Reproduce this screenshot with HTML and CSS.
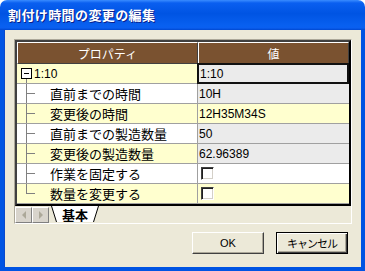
FILE: index.html
```html
<!DOCTYPE html>
<html lang="ja">
<head>
<meta charset="utf-8">
<link rel="stylesheet" href="styles.css">
</head>
<body>
<div class="window">
  <div class="titlebar"><span class="title">割付け時間の変更の編集</span></div>
  <div class="body">
    <div class="panel">
      <div class="grid">
        <div class="row head">
          <div class="hc hc1">プロパティ</div>
          <div class="hc hc2">値</div>
        </div>
        <div class="row">
          <div class="c1 yel root"><span class="minus"></span><span class="lat">1:10</span></div>
          <div class="c2 edit">1:10</div>
        </div>
        <div class="row">
          <div class="c1 wht"><span class="tree"></span>直前までの時間</div>
          <div class="c2 gry">10H</div>
        </div>
        <div class="row">
          <div class="c1 yel"><span class="tree"></span>変更後の時間</div>
          <div class="c2 yel">12H35M34S</div>
        </div>
        <div class="row">
          <div class="c1 wht"><span class="tree"></span>直前までの製造数量</div>
          <div class="c2 gry">50</div>
        </div>
        <div class="row">
          <div class="c1 yel"><span class="tree"></span>変更後の製造数量</div>
          <div class="c2 gry">62.96389</div>
        </div>
        <div class="row">
          <div class="c1 wht"><span class="tree"></span>作業を固定する</div>
          <div class="c2 wht"><span class="check"></span></div>
        </div>
        <div class="row">
          <div class="c1 yel"><span class="tree last"></span>数量を変更する</div>
          <div class="c2 yel"><span class="check"></span></div>
        </div>
      </div>
      <div class="tabs">
        <div class="sbtn"><svg width="6" height="8" viewBox="0 0 6 8"><polygon points="5,0 5,8 1,4" fill="#aca899"/></svg></div>
        <div class="sbtn"><svg width="6" height="8" viewBox="0 0 6 8"><polygon points="1,0 1,8 5,4" fill="#aca899"/></svg></div>
        <div class="tab">
          <span class="tabtext">基本</span>
          <svg class="tabshape" width="49" height="17" viewBox="0 0 49 17">
            <polygon points="0.5,0 5.5,16 42.5,16 47.5,0" fill="#ffffff"/>
            <line x1="0.5" y1="0" x2="5.5" y2="16" stroke="#000" stroke-width="1"/>
            <line x1="47.5" y1="0" x2="42.5" y2="16" stroke="#000" stroke-width="1"/>
          </svg>
        </div>
      </div>
    </div>
    <div class="buttons">
      <button class="btn">OK</button>
      <button class="btn def">キャンセル</button>
    </div>
  </div>
</div>
</body>
</html>
```
FILE: styles.css
```css
html, body {
  margin: 0;
  padding: 0;
  background: #ffffff;
}
.window {
  width: 365px;
  height: 271px;
  display: flex;
  flex-direction: column;
  font-family: "Noto Sans CJK JP", "Liberation Sans", sans-serif;
  overflow: hidden;
}
.titlebar {
  height: 30px;
  flex: none;
  box-sizing: border-box;
  border-radius: 7px 7px 0 0;
  background: linear-gradient(180deg, #3a8cff 0%, #0a5ff0 10%, #0054e3 45%, #0860f0 85%, #0a5ff0 93%, #0047d0 100%);
  display: flex;
  align-items: center;
  padding: 0 0 1px 8px;
}
.title {
  color: #ffffff;
  font-weight: bold;
  font-size: 13px;
  letter-spacing: 0.4px;
  text-shadow: 1px 1px #0a1e8a;
}
.body {
  flex: 1;
  background: #ece9d8;
  border-left: 4px solid #0054e3;
  border-right: 4px solid #0054e3;
  border-bottom: 4px solid #0054e3;
  box-shadow: inset 1px 0 #0a49cc;
  padding: 9px 9px 0 10px;
  display: flex;
  flex-direction: column;
}
.panel {
  width: 338px;
  box-sizing: border-box;
  border: 1px solid;
  border-color: #aca899 #ffffff #ffffff #aca899;
  display: flex;
  flex-direction: column;
}
.grid {
  border: 2px solid;
  border-color: #404040 #000000 #000000 #404040;
  display: flex;
  flex-direction: column;
}
.row {
  display: grid;
  grid-template-columns: 181px 151px;
  height: 20px;
}
.row.head {
  height: 22px;
}
.hc {
  background: #7a5230;
  color: #ffffff;
  font-size: 12px;
  display: flex;
  align-items: center;
  justify-content: center;
  box-sizing: border-box;
  border: 1px solid;
  border-color: #ffffff #404040 #404040 #ffffff;
}
.c1, .c2 {
  box-sizing: border-box;
  border-bottom: 1px solid #a0a0a0;
  display: flex;
  align-items: center;
  font-size: 13px;
  color: #000000;
}
.c1 {
  border-right: 1px solid #a0a0a0;
}
.c2 {
  font-family: "Liberation Sans", sans-serif;
  font-size: 12px;
  padding-left: 1px;
}
.yel { background-color: #ffffcf; }
.wht { background-color: #ffffff; }
.gry { background-color: #ebebeb; }
.root {
  padding-left: 4px;
  background-image: linear-gradient(#808080, #808080);
  background-repeat: no-repeat;
  background-position: 9px 15px;
  background-size: 1px 5px;
}
.lat {
  font-family: "Liberation Sans", sans-serif;
  font-size: 12px;
}
.minus {
  width: 9px;
  height: 9px;
  border: 1px solid #000000;
  background: linear-gradient(#000, #000) no-repeat 2px 4px / 5px 1px, #ffffff;
  margin-right: 2px;
  flex: none;
}
.tree {
  width: 33px;
  height: 100%;
  flex: none;
  background-image: linear-gradient(#808080, #808080), linear-gradient(#808080, #808080);
  background-repeat: no-repeat;
  background-position: 9px 0, 9px 9px;
  background-size: 1px 100%, 9px 1px;
}
.tree.last {
  background-size: 1px 10px, 9px 1px;
}
.edit {
  background: #ebebeb;
  border: 2px solid #111111;
  margin-left: -1px;
  margin-top: -1px;
  padding-left: 1px;
}
.check {
  width: 13px;
  height: 13px;
  box-sizing: border-box;
  margin-left: 2px;
  background: #ffffff;
  border: 1px solid;
  border-color: #404040 #ffffff #ffffff #404040;
  box-shadow: inset 1px 1px #202020, inset -1px -1px #d4d0c8;
}
.tabs {
  height: 17px;
  display: flex;
  align-items: flex-start;
}
.sbtn {
  width: 17px;
  height: 16px;
  box-sizing: border-box;
  margin-top: 1px;
  background: #d8d4cc;
  border: 1px solid;
  border-color: #ffffff #808080 #808080 #ffffff;
  display: flex;
  align-items: center;
  justify-content: center;
}
.tab {
  margin-left: 2px;
  width: 49px;
  height: 17px;
  position: relative;
  display: flex;
  align-items: center;
  justify-content: center;
}
.tabshape {
  position: absolute;
  left: 0;
  top: 0;
  display: block;
}
.tabtext {
  position: relative;
  z-index: 1;
  font-family: "Noto Sans CJK JP", sans-serif;
  font-size: 13px;
  line-height: 15px;
  font-weight: bold;
  color: #000000;
  margin-left: -1px;
}
.buttons {
  display: flex;
  justify-content: flex-end;
  gap: 12px;
  margin-top: 8px;
  width: 334px;
}
.btn {
  width: 72px;
  height: 22px;
  box-sizing: border-box;
  margin: 0;
  padding: 0;
  background: #ece9d8;
  border: 1px solid;
  border-color: #ffffff #404040 #404040 #ffffff;
  box-shadow: inset -1px -1px #aca899;
  font-family: "Liberation Sans", "Noto Sans CJK JP", sans-serif;
  font-size: 11px;
  color: #000000;
}
.btn.def {
  border: 1px solid #000000;
  box-shadow: inset 1px 1px #ffffff, inset -1px -1px #404040, inset -2px -2px #aca899;
  font-family: "Noto Sans CJK JP", sans-serif;
  letter-spacing: -1px;
}
```
